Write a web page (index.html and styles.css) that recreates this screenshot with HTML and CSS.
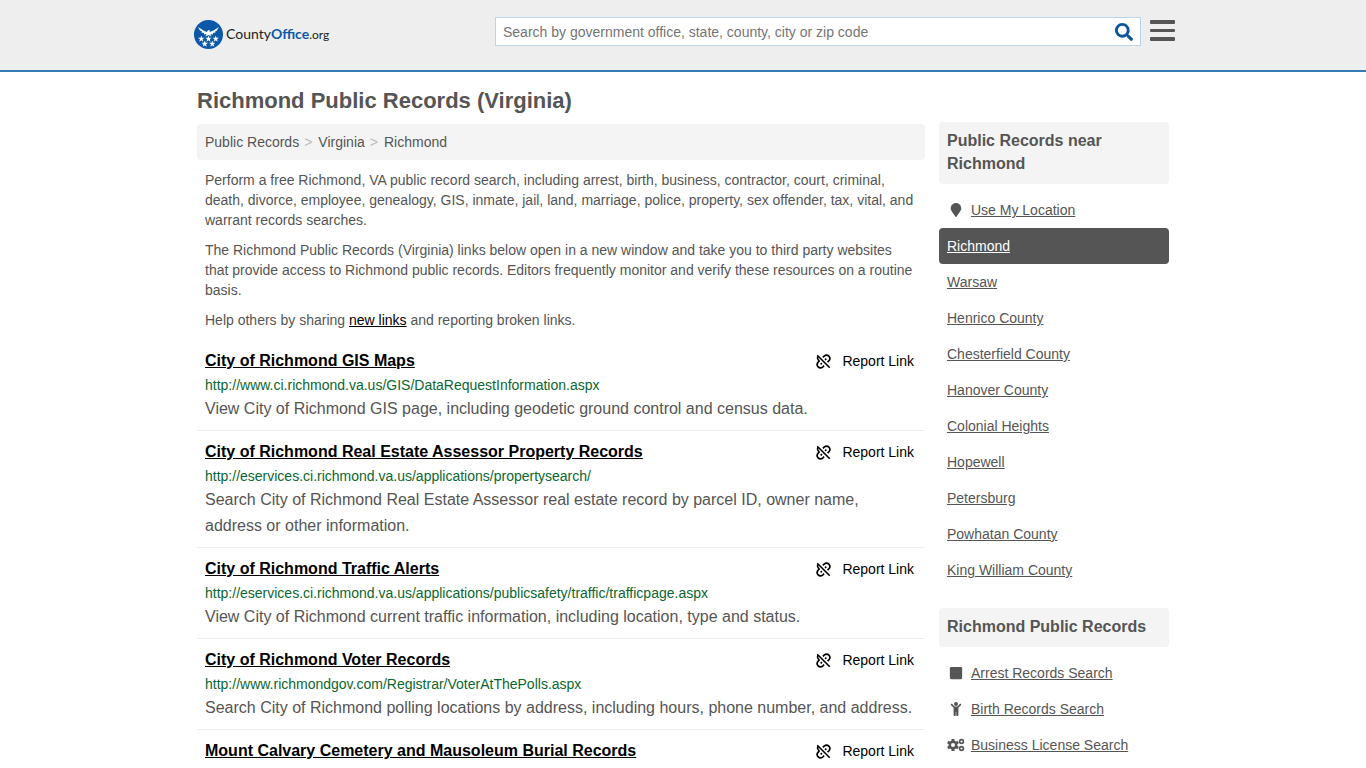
FILE: index.html
```html
<!DOCTYPE html>
<html lang="en">
<head>
<meta charset="utf-8">
<meta name="viewport" content="width=device-width, initial-scale=1">
<title>Richmond Public Records (Virginia)</title>
<link rel="stylesheet" href="styles.css">
</head>
<body>
<svg class="sprite" aria-hidden="true">
  <symbol id="unlink" viewBox="0 0 24 24">
    <g fill="none" stroke="currentColor" stroke-width="2.600">
      <path d="M2 2 22 22"/>
      <path d="M11 5.500 13 3.500C15.500 1.300 18.500 1.300 20.500 3.300S22.700 8.500 20.500 11L18.500 13"/>
      <path d="M13 18.500 11 20.500C8.500 22.700 5.500 22.700 3.500 20.700S1.300 15.500 3.500 13L5.500 11"/>
      <path d="M14.500 9.500 16.500 7.500M7.500 16.500 9.500 14.500"/>
      <path d="M3.500 3.500C1.500 6 2.500 9 5.500 11"/>
    </g>
  </symbol>
  <symbol id="star" viewBox="0 0 10 10"><path fill="#fff" d="M5 0 6.200 3.500H10L7 5.800 8.100 9.500 5 7.300 1.900 9.500 3 5.800 0 3.500H3.800Z"/></symbol>
</svg>
<header class="site-header">
  <div class="header-inner">
    <a class="logo" href="#" aria-label="CountyOffice.org">
      <svg class="logo-mark" viewBox="0 0 58 58" aria-hidden="true">
        <circle cx="29" cy="29" r="29" fill="#0b58a8"/>
        <path fill="#fff" d="M8 14 19 21 25 24 29 20 32 21 31 24 39 21 50 14 45 22 42 23 43 25 38 26 38 29 33 28 35 33 29 30 23 33 25 28 20 29 20 26 15 25 16 23 12 21Z"/>
        <use href="#star" x="8" y="31" width="13" height="13"/>
        <use href="#star" x="22.500" y="31" width="13" height="13"/>
        <use href="#star" x="37" y="31" width="13" height="13"/>
        <use href="#star" x="15" y="41" width="13" height="13"/>
        <use href="#star" x="30" y="41" width="13" height="13"/>
      </svg>
      <span class="logo-text">County<b>Office</b><span class="tld">.org</span></span>
    </a>
    <form class="search" role="search">
      <input class="search-input" type="search" aria-label="Search" placeholder="Search by government office, state, county, city or zip code">
      <button class="search-button" type="button" aria-label="Search">
        <svg viewBox="0 0 512 512" width="18" height="18"><path fill="currentColor" d="M505 442.700L405.300 343c-4.500-4.500-10.600-7-17-7H372c27.600-35.300 44-79.700 44-128C416 93.100 322.900 0 208 0S0 93.100 0 208s93.100 208 208 208c48.300 0 92.700-16.400 128-44v16.300c0 6.400 2.500 12.500 7 17l99.700 99.700c9.400 9.400 24.600 9.400 33.900 0l28.300-28.300c9.400-9.400 9.400-24.600.1-34zM208 336c-70.700 0-128-57.200-128-128 0-70.700 57.200-128 128-128 70.700 0 128 57.200 128 128 0 70.700-57.200 128-128 128z"/></svg>
      </button>
    </form>
    <button class="menu-button" type="button" aria-label="Menu">
      <svg viewBox="0 0 25 22" width="25" height="22" fill="#555"><rect width="25" height="4" rx="1"/><rect y="9" width="25" height="3" rx="1"/><rect y="17" width="25" height="4" rx="1"/></svg>
    </button>
  </div>
</header>

<div class="page">
  <main class="content">
    <h1 class="title">Richmond Public Records (Virginia)</h1>
    <nav class="crumbs" aria-label="Breadcrumb">
      <a href="#">Public Records</a><span class="sep">&gt;</span><a href="#">Virginia</a><span class="sep">&gt;</span><a href="#">Richmond</a>
    </nav>
    <div class="intro">
      <p>Perform a free Richmond, VA public record search, including arrest, birth, business, contractor, court, criminal, death, divorce, employee, genealogy, GIS, inmate, jail, land, marriage, police, property, sex offender, tax, vital, and warrant records searches.</p>
      <p>The Richmond Public Records (Virginia) links below open in a new window and take you to third party websites that provide access to Richmond public records. Editors frequently monitor and verify these resources on a routine basis.</p>
      <p>Help others by sharing <a href="#">new links</a> and reporting broken links.</p>
    </div>
    <ul class="results">
      <li class="result">
        <div class="result-head"><a class="result-title" href="#">City of Richmond GIS Maps</a><a class="report" href="#"><svg class="report-icon" aria-hidden="true"><use href="#unlink"/></svg>Report Link</a></div>
        <div class="result-url">http://www.ci.richmond.va.us/GIS/DataRequestInformation.aspx</div>
        <p class="result-text">View City of Richmond GIS page, including geodetic ground control and census data.</p>
      </li>
      <li class="result">
        <div class="result-head"><a class="result-title" href="#">City of Richmond Real Estate Assessor Property Records</a><a class="report" href="#"><svg class="report-icon" aria-hidden="true"><use href="#unlink"/></svg>Report Link</a></div>
        <div class="result-url">http://eservices.ci.richmond.va.us/applications/propertysearch/</div>
        <p class="result-text">Search City of Richmond Real Estate Assessor real estate record by parcel ID, owner name, address or other information.</p>
      </li>
      <li class="result">
        <div class="result-head"><a class="result-title" href="#">City of Richmond Traffic Alerts</a><a class="report" href="#"><svg class="report-icon" aria-hidden="true"><use href="#unlink"/></svg>Report Link</a></div>
        <div class="result-url">http://eservices.ci.richmond.va.us/applications/publicsafety/traffic/trafficpage.aspx</div>
        <p class="result-text">View City of Richmond current traffic information, including location, type and status.</p>
      </li>
      <li class="result">
        <div class="result-head"><a class="result-title" href="#">City of Richmond Voter Records</a><a class="report" href="#"><svg class="report-icon" aria-hidden="true"><use href="#unlink"/></svg>Report Link</a></div>
        <div class="result-url">http://www.richmondgov.com/Registrar/VoterAtThePolls.aspx</div>
        <p class="result-text">Search City of Richmond polling locations by address, including hours, phone number, and address.</p>
      </li>
      <li class="result">
        <div class="result-head"><a class="result-title" href="#">Mount Calvary Cemetery and Mausoleum Burial Records</a><a class="report" href="#"><svg class="report-icon" aria-hidden="true"><use href="#unlink"/></svg>Report Link</a></div>
      </li>
    </ul>
  </main>

  <aside class="sidebar">
    <section>
      <h2 class="side-title">Public Records near Richmond</h2>
      <ul class="side-list">
        <li><a href="#"><svg class="side-icon" viewBox="-64 0 512 512" aria-hidden="true"><path d="M172.268 501.670C26.970 291.031 0 269.413 0 192 0 85.961 85.961 0 192 0s192 85.961 192 192c0 77.413-26.970 99.031-172.268 309.670-9.535 13.774-29.930 13.773-39.464 0z"/></svg><span>Use My Location</span></a></li>
        <li><a class="current" href="#" aria-current="page"><span>Richmond</span></a></li>
        <li><a href="#"><span>Warsaw</span></a></li>
        <li><a href="#"><span>Henrico County</span></a></li>
        <li><a href="#"><span>Chesterfield County</span></a></li>
        <li><a href="#"><span>Hanover County</span></a></li>
        <li><a href="#"><span>Colonial Heights</span></a></li>
        <li><a href="#"><span>Hopewell</span></a></li>
        <li><a href="#"><span>Petersburg</span></a></li>
        <li><a href="#"><span>Powhatan County</span></a></li>
        <li><a href="#"><span>King William County</span></a></li>
      </ul>
    </section>
    <section>
      <h2 class="side-title">Richmond Public Records</h2>
      <ul class="side-list">
        <li><a href="#"><svg class="side-icon" viewBox="-32 0 512 512" aria-hidden="true"><path d="M400 32H48C21.500 32 0 53.500 0 80v352c0 26.500 21.500 48 48 48h352c26.500 0 48-21.500 48-48V80c0-26.500-21.500-48-48-48z"/></svg><span>Arrest Records Search</span></a></li>
        <li><a href="#"><svg class="side-icon" viewBox="-64 0 512 512" aria-hidden="true"><path d="M120 72c0-39.765 32.235-72 72-72s72 32.235 72 72c0 39.764-32.235 72-72 72s-72-32.236-72-72zm254.627 1.373c-12.496-12.497-32.758-12.497-45.254 0L242.745 160H141.254L54.627 73.373c-12.496-12.497-32.758-12.497-45.254 0-12.497 12.497-12.497 32.758 0 45.255L104 213.254V480c0 17.673 14.327 32 32 32h16c17.673 0 32-14.327 32-32V368h16v112c0 17.673 14.327 32 32 32h16c17.673 0 32-14.327 32-32V213.254l94.627-94.627c12.497-12.497 12.497-32.757 0-45.254z"/></svg><span>Birth Records Search</span></a></li>
        <li><a href="#"><svg class="side-icon" viewBox="0 0 36 28" aria-hidden="true"><g fill="none" stroke="currentColor"><circle cx="12" cy="14" r="6.500" stroke-width="5"/><path stroke-width="6" d="M12 2V6M12 22V26M1.600 8 5.100 10M18.900 18 22.400 20M1.600 20 5.100 18M18.900 10 22.400 8"/><circle cx="29" cy="7" r="3.800" stroke-width="3.200"/><circle cx="29" cy="21" r="3.800" stroke-width="3.200"/></g></svg><span>Business License Search</span></a></li>
      </ul>
    </section>
  </aside>
</div>
</body>
</html>
```
FILE: styles.css
```css
* { box-sizing: border-box; }

body {
  margin: 0;
  background: #fff;
  color: #555;
  font: 14px/20px "Liberation Sans", Arial, sans-serif;
}

h1, h2, p, ul { margin: 0; padding: 0; }
ul { list-style: none; }
a { color: inherit; }
button { padding: 0; border: 0; background: none; cursor: pointer; }
svg { display: block; flex: none; }
.sprite { position: absolute; width: 0; height: 0; }

.site-header {
  background: #eee;
  border-bottom: 2px solid #337ab7;
}

.header-inner {
  display: flex;
  align-items: flex-start;
  max-width: 984px;
  height: 70px;
  margin: 0 auto;
  padding-top: 17px;
}

.logo {
  display: flex;
  align-items: center;
  gap: 3px;
  padding: 3px 0 0 3px;
  color: #222;
  text-decoration: none;
}
.logo-mark { width: 29px; height: 29px; }
.logo-text { font: 14px/20px Lato, sans-serif; }
.logo-text b { color: #0b58a8; font-weight: 700; }
.tld { font-size: 12px; }

.search {
  display: flex;
  flex: 0 1 646px;
  height: 29px;
  margin-left: auto;
  background: #fff;
  border: 1px solid #bcd4e8;
}
.search-input {
  flex: 1;
  min-width: 0;
  padding: 0 7px;
  border: 0;
  background: transparent;
  color: #555;
  font: inherit;
}
.search-input::placeholder { color: #757575; }
.search-button { padding: 0 7px; color: #0b549e; }
.menu-button { margin: 3px 0 0 9px; }

.page {
  display: flex;
  align-items: flex-start;
  gap: 14px;
  max-width: 972px;
  margin: 0 auto;
}
.content { flex: 1; min-width: 0; }

.title {
  padding: 15px 0 9px;
  font-size: 22px;
  line-height: 28px;
}

.crumbs {
  padding: 8px;
  background: #f4f4f4;
  border-radius: 4px;
}
.crumbs a { text-decoration: none; }
.sep { margin: 0 6px 0 5px; color: #bbb; }

.intro { padding: 0 8px; }
.intro p { margin: 10px 0; }
.intro a { color: #000; }

.result {
  padding: 9px 8px 8px;
  border-bottom: 1px solid #eee;
}
.result-head {
  display: flex;
  justify-content: space-between;
  margin-bottom: 2px;
  padding-right: 3px;
  color: #000;
  line-height: 24px;
}
.result-title { font-size: 16px; font-weight: bold; }
.report {
  display: flex;
  align-items: center;
  gap: 11px;
  text-decoration: none;
}
.report-icon { width: 15px; height: 15px; }
.result-url { margin-bottom: 1px; color: #0b6630; }
.result-text { font-size: 16px; line-height: 26px; }

.sidebar { flex: 0 0 230px; padding-top: 50px; }
.side-title {
  margin-bottom: 8px;
  padding: 7px 8px 9px;
  background: #f4f4f4;
  border-radius: 4px;
  font-size: 16px;
  line-height: 23px;
}
.side-list { margin-bottom: 20px; }
.side-list a {
  display: flex;
  align-items: center;
  padding: 8px;
  border-radius: 4px;
  text-decoration: none;
}
.side-list span { text-decoration: underline; }
.side-list .current { background: #555; color: #fff; }
.side-icon {
  width: 18px;
  height: 14px;
  margin-right: 6px;
  fill: currentColor;
}
```
